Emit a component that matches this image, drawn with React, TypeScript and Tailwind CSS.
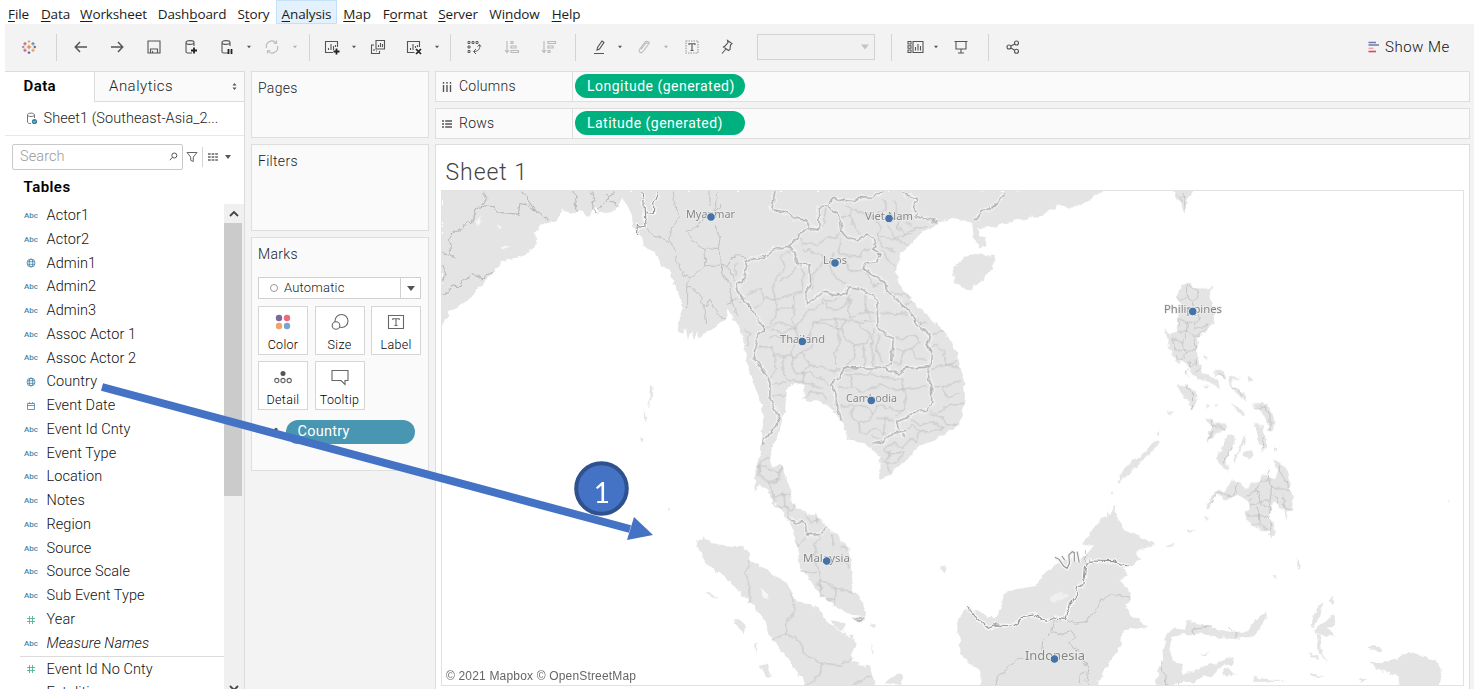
import type { ReactNode } from "react";

const MENU = [
  { pre: "", key: "F", post: "ile", box: "w-[37px]" },
  { pre: "", key: "D", post: "ata", box: "w-[37px]" },
  { pre: "", key: "W", post: "orksheet", box: "w-[79px]" },
  { pre: "Dash", key: "b", post: "oard", box: "w-[78px]" },
  { pre: "S", key: "t", post: "ory", box: "w-[45px]" },
  { pre: "", key: "A", post: "nalysis", box: "w-[61px] bg-[#e3f1fc] border border-[#c5e1f7]" },
  { pre: "", key: "M", post: "ap", box: "w-[40px]" },
  { pre: "F", key: "o", post: "rmat", box: "w-[56px]" },
  { pre: "", key: "S", post: "erver", box: "w-[50px]" },
  { pre: "Wi", key: "n", post: "dow", box: "w-[63px]" },
  { pre: "", key: "H", post: "elp", box: "w-[40px]" },
];

function Icon({ ml, faded, children }: { ml: string; faded?: boolean; children: ReactNode }) {
  return (
    <svg viewBox="0 0 16 16" fill="none" stroke={faded ? "#b9b9b9" : "#555"} strokeWidth="1.1" className={`h-4 w-4 shrink-0 overflow-visible ${ml}`}>
      {children}
    </svg>
  );
}

function Caret({ ml, faded }: { ml: string; faded?: boolean }) {
  return (
    <svg viewBox="0 0 6 4" className={`h-1 w-1.5 shrink-0 ${ml}`}>
      <path d="M1 .7h4L3 3.3z" fill={faded ? "#b0b0b0" : "#555"} />
    </svg>
  );
}

function Sep({ ml }: { ml: string }) {
  return <div className={`h-[27px] w-px shrink-0 bg-[#d4d4d4] ${ml}`} />;
}

function Spark({ x, y, s, c }: { x: number; y: number; s: number; c: string }) {
  return <path d={`M${x - s} ${y}H${x + s}M${x} ${y - s}V${y + s}`} stroke={c} strokeWidth="1.1" />;
}

const DB = "M9 14H4.5C3 13.500 3 13 3 13V3.500M3 3.500C3 1 11 1 11 3.500C11 6 3 6 3 3.500M11 3.500V7";

function Toolbar() {
  return (
    <div className="ml-[5px] flex h-[46px] shrink-0 items-center bg-[#f3f3f3]">
      <Icon ml="ml-[16px]">
        <Spark x={8} y={8} s={2.3} c="#e8762c" />
        <Spark x={4} y={4.800} s={1.700} c="#d05b5b" />
        <Spark x={12} y={4.800} s={1.700} c="#59879b" />
        <Spark x={4} y={11.300} s={1.700} c="#c95a75" />
        <Spark x={12} y={11.300} s={1.700} c="#e39a4c" />
        <Spark x={8} y={2.500} s={1.300} c="#e0a060" />
        <Spark x={8} y={13.600} s={1.300} c="#5b6591" />
        <Spark x={2.200} y={8} s={1.300} c="#8288b5" />
        <Spark x={13.800} y={8} s={1.300} c="#4e5a92" />
      </Icon>
      <Sep ml="ml-[19px]" />
      <Icon ml="ml-[16px]"><path d="M14 8H2.500M7 3L2.300 8L7 13" strokeWidth="1.500" /></Icon>
      <Icon ml="ml-[20px]"><path d="M2 8h11.500M9 3l4.700 5L9 13" strokeWidth="1.500" /></Icon>
      <Icon ml="ml-[21px]"><path d="M2 2h12v12H2zM4.500 14V10h7v4M6.500 12v2" /></Icon>
      <Icon ml="ml-[21px]"><path d={DB} /><path d="M11 8.500v6M8 11.500h6" strokeWidth="1.800" stroke="#222" /></Icon>
      <Icon ml="ml-[20px]"><path d={DB} /><path d="M9.500 10v5M12.500 10v5" strokeWidth="1.800" stroke="#222" /></Icon>
      <Caret ml="ml-[11px]" />
      <Icon ml="ml-[12px]" faded><path d="M2.500 9A5.500 5.500 0 0 1 12 4M13.500 7A5.500 5.500 0 0 1 4 12M9.500 4.300H12.500V1.500M6.500 11.700H3.500V14.500" /></Icon>
      <Caret ml="ml-[12px]" faded />
      <Sep ml="ml-[11px]" />
      <Icon ml="ml-[14px]"><path d="M9 13.500H1.500v-11h12V8M4.500 11V9M7 11V5M9.500 11V7M11.500 8V6" /><path d="M12.500 9.500v6M9.500 12.500h6" strokeWidth="1.800" stroke="#222" /></Icon>
      <Caret ml="ml-[11px]" />
      <Icon ml="ml-[13px]"><path d="M6 1.500h8.500v8.500H6zM8.500 8V6M10.500 8V4M12.500 8V5M4 6H1.500v8.500H9.500V12M4 12V10M6.500 12.500V11.500" /></Icon>
      <Icon ml="ml-[20px]"><path d="M8.500 13.500H1.500v-11h12V8M4.500 11V9M7 11V5M9.500 9V7M11.500 8V6" /><path d="M10 10l5 5M15 10l-5 5" strokeWidth="1.700" stroke="#222" /></Icon>
      <Caret ml="ml-[12px]" />
      <Sep ml="ml-[10px]" />
      <Icon ml="ml-[15px]"><path d="M2 2.500h2v2H2zM6 2.500h2v2H6zM10 2.500h2v2h-2zM2 7h2v2H2zM2 11.500h2v2H2zM13.500 6c1 4-1.500 6.500-5.500 6.500M10 10L7.500 12.500L10 15M11.500 7.500L13.500 5.500L15 7.500" strokeWidth=".95" /></Icon>
      <Icon ml="ml-[22px]" faded><path d="M3 2v11M1 11l2 2.500L5 11M7 2.500h2v2H7zM7 7h5v2H7zM7 11.500h7.500v2H7z" /></Icon>
      <Icon ml="ml-[21px]" faded><path d="M3 2v11M1 11l2 2.500L5 11M7 2.500h7.500v2H7zM7 7h5v2H7zM7 11.500h2v2H7z" /></Icon>
      <Sep ml="ml-[18px]" />
      <Icon ml="ml-[16px]"><path d="M5 11l.5-2.500L10 2l2 1.300L7.500 10zM2 14.500h10" /></Icon>
      <Caret ml="ml-[9px]" />
      <Icon ml="ml-[13px]" faded><path d="M5 10.500L9.500 4.500C11 3 13 4.500 12 6L7 12.500C5 15 2 12.500 3.500 10.500L8.500 3.500C10.500 1 14 3 13 5" /></Icon>
      <Caret ml="ml-[11px]" faded />
      <Icon ml="ml-[15px]"><path d="M2 2h12v12H2z" strokeDasharray="1.500 1" stroke="#999" /><path d="M5 6V4.800h6V6M8 5v6.500M6.500 11.500h3" /></Icon>
      <Icon ml="ml-[19px]"><path d="M8.500 1.500L13 4.500L11.500 6L11 10.500L9.500 11.500L4.500 8L6 7L9 3.500zM7 10l-4 4.500" /></Icon>
      <div className="ml-[22px] flex h-[26px] w-[118px] shrink-0 items-center justify-end border border-[#d2d2d2] bg-[#f1f1f1] pr-[5px]">
        <svg viewBox="0 0 8 6" className="h-1.5 w-2"><path d="M0 .5h8L4 5.500z" fill="#c4c4c4" /></svg>
      </div>
      <Sep ml="ml-[16px]" />
      <Icon ml="ml-[16px]"><path d="M0 2.500h3v2.500H0zM0 6.700h3v2.500H0zM0 11h3v2.500H0zM5 2.500h10v11H5zM7.500 11.500V8M10 11.500V5M12.500 11.500V7" /></Icon>
      <Caret ml="ml-[9px]" />
      <Icon ml="ml-[14px]"><path d="M1.500 2.500h13M3 2.500v7.500h10V2.500M8 10v4M5 14h6" /></Icon>
      <Sep ml="ml-[19px]" />
      <Icon ml="ml-[16px]"><circle cx="4" cy="8" r="2" /><circle cx="11.500" cy="4" r="2" /><circle cx="11.500" cy="12.300" r="2" /><path d="M6 7l3.700-2M6 9l3.700 2.300" /></Icon>
      <svg viewBox="0 0 12 12" className="ml-[347px] h-3 w-3 shrink-0">
        <path d="M.5 1.500H8M.5 4H11" stroke="#6f7ba6" strokeWidth="1.600" />
        <path d="M.5 7.300H5.500" stroke="#f0a0a0" strokeWidth="1.300" />
        <path d="M.5 10.500H8" stroke="#e0485a" strokeWidth="1.600" />
      </svg>
      <span className="ml-[5px] whitespace-nowrap text-[15px] font-light tracking-[0.5px] text-[#111]">Show Me</span>
    </div>
  );
}

type Kind = "abc" | "geo" | "date" | "num";
const FIELDS: [Kind, string][] = [
  ["abc", "Actor1"], ["abc", "Actor2"], ["geo", "Admin1"], ["abc", "Admin2"], ["abc", "Admin3"],
  ["abc", "Assoc Actor 1"], ["abc", "Assoc Actor 2"], ["geo", "Country"], ["date", "Event Date"],
  ["abc", "Event Id Cnty"], ["abc", "Event Type"], ["abc", "Location"], ["abc", "Notes"], ["abc", "Region"],
  ["abc", "Source"], ["abc", "Source Scale"], ["abc", "Sub Event Type"], ["num", "Year"], ["abc", "Measure Names"],
];

function KindIcon({ kind }: { kind: Kind }) {
  if (kind === "abc") return <span className="text-[8px] font-medium leading-none text-[#4a86a8]">Abc</span>;
  return (
    <svg viewBox="0 0 10 10" className="h-2.5 w-2.5" fill="none" stroke={kind === "num" ? "#4fae8b" : "#4a86a8"} strokeWidth=".85">
      {kind === "geo" && <><circle cx="5" cy="5" r="4" /><ellipse cx="5" cy="5" rx="1.800" ry="4" /><path d="M1.300 3.700h7.400M1.300 6.300h7.400" /></>}
      {kind === "date" && <path d="M1.500 2.500h7v6h-7zM1.500 4.500h7M3.300 1v1.500M6.700 1v1.500" />}
      {kind === "num" && <path d="M3.500 1v8M6.500 1v8M1 3.500h8M1 6.500h8" />}
    </svg>
  );
}

function Field({ kind, name }: { kind: Kind; name: string }) {
  return (
    <div className="flex h-[23.780px] shrink-0 items-center">
      <div className="ml-[17px] flex w-[18px] items-center justify-center">
        <KindIcon kind={kind} />
      </div>
      <span className={`ml-[6.500px] whitespace-nowrap text-[14.500px] font-light tracking-[0.08px] text-[#111] ${name === "Measure Names" ? "italic" : ""}`}>{name}</span>
    </div>
  );
}

function DataPane() {
  return (
    <div className="flex w-[240px] shrink-0 flex-col border-r border-t border-[#dcdcdc] bg-white">
      <div className="flex h-[30px] shrink-0">
        <div className="w-[89px] pl-[18.500px] pt-[3px] text-[15px] font-semibold tracking-[0.4px] text-black">Data</div>
        <div className="flex flex-1 items-center justify-between border-b border-l border-[#dcdcdc] bg-[#fafafa] pl-[14px] pr-[7px]">
          <span className="text-[15px] font-light tracking-[0.5px] text-[#222]">Analytics</span>
          <svg viewBox="0 0 5 7" className="h-[7px] w-[5px]"><path d="M2.500 0l2 2.500h-4zM2.500 7l2-2.500h-4z" fill="#555" /></svg>
        </div>
      </div>
      <div className="flex h-[34px] shrink-0 items-center border-b border-[#e8e8e8] pl-[21px]">
        <svg viewBox="0 0 12 13" className="h-[13px] w-3" fill="none" stroke="#777" strokeWidth="1">
          <path d="M5 11.500H3.500C1.500 11 1.500 10 1.500 10V3C1.500.5 8.500.5 8.500 3C8.500 5 1.500 5 1.500 3M8.500 3V6" />
          <circle cx="8.500" cy="9.500" r="2.600" fill="#2f8298" stroke="none" />
          <path d="M7.300 9.500l.9.900L9.800 8.700" stroke="#fff" strokeWidth=".7" />
        </svg>
        <span className="ml-[5.500px] whitespace-nowrap text-[14.500px] font-light tracking-[0.05px] text-[#222]">Sheet1 (Southeast-Asia_2...</span>
      </div>
      <div className="mt-[7px] flex h-[27px] shrink-0 items-center pl-[7px]">
        <div className="flex h-[26px] w-[171px] items-center justify-between rounded-[2px] border border-[#c9c9c9] pl-[7px] pr-[4px]">
          <span className="text-[14.500px] font-light tracking-[0.1px] text-[#999]">Search</span>
          <svg viewBox="0 0 9 9" className="h-[9px] w-[9px]" fill="none" stroke="#555"><circle cx="5.300" cy="3.500" r="2.500" /><path d="M3.500 5.300L.8 8.200" /></svg>
        </div>
        <svg viewBox="0 0 12 12" className="ml-[3px] h-3 w-3" fill="none" stroke="#666"><path d="M1 1.500h10L7.300 6v4.500L4.700 9.300V6z" /></svg>
        <div className="ml-[4px] h-[20px] w-px bg-[#d4d4d4]" />
        <svg viewBox="0 0 10 8" className="ml-[5px] h-2 w-2.5" stroke="#666" strokeWidth="1.700"><path d="M0 1h10M0 4h10M0 7h10" strokeDasharray="2.700 .9" /></svg>
        <svg viewBox="0 0 6 4" className="ml-[7px] h-1 w-1.5"><path d="M0 0h6L3 4z" fill="#555" /></svg>
      </div>
      <div className="flex h-[34px] shrink-0 items-center pl-[18.500px] pt-[1px] text-[15px] font-semibold tracking-[0.45px] text-black">Tables</div>
      <div className="flex min-h-0 flex-1">
        <div className="flex w-[219px] flex-col overflow-hidden">
          {FIELDS.map(([k, n]) => <Field key={n} kind={k} name={n} />)}
          <div className="mb-[1px] ml-[15px] h-px shrink-0 bg-[#dcdcdc]" />
          <Field kind="num" name="Event Id No Cnty" />
          <Field kind="num" name="Fatalities" />
        </div>
        <div className="flex w-[20px] flex-col items-start overflow-hidden bg-[#f0f0f0]">
          <svg viewBox="0 0 10 10" className="mb-[4px] ml-[4.500px] mt-[5px] h-2.5 w-2.5 shrink-0" fill="none" stroke="#444" strokeWidth="1.800"><path d="M1 7l4-4 4 4" /></svg>
          <div className="h-[273px] w-[18px] shrink-0 bg-[#cbcbcb]" />
          <svg viewBox="0 0 10 10" className="ml-[4.500px] mt-[187px] h-2.5 w-2.5 shrink-0" fill="none" stroke="#444" strokeWidth="1.800"><path d="M1 3l4 4 4-4" /></svg>
        </div>
      </div>
    </div>
  );
}

function MarkButton({ label, children }: { label: string; children: ReactNode }) {
  return (
    <div className="flex h-[49px] w-[50px] flex-col items-center border border-[#d6d6d6] bg-white pt-[5px]">
      <svg viewBox="0 0 20 20" className="h-5 w-5" fill="none" stroke="#666" strokeWidth="1.100">{children}</svg>
      <span className="mt-[4.500px] text-[12.500px] font-light leading-[16px] tracking-[0.3px] text-black">{label}</span>
    </div>
  );
}

function Cards() {
  const title = "text-[14px] font-light leading-[18px] tracking-[0.3px] text-[#222]";
  return (
    <div className="ml-[5.500px] flex w-[178px] shrink-0 flex-col gap-[6px]">
      <div className="h-[67px] border border-[#dedede] bg-[#fafafa] pl-[6.500px] pt-[7px]"><div className={title}>Pages</div></div>
      <div className="h-[87px] border border-[#dedede] bg-[#fafafa] pl-[6.500px] pt-[7px]"><div className={title}>Filters</div></div>
      <div className="h-[234px] border border-[#dedede] bg-[#fafafa] pl-[6.500px] pt-[7px]">
        <div className={title}>Marks</div>
        <div className="mt-[14px] flex h-[22px] w-[163px] items-center border border-[#d0d0d0] bg-white">
          <div className="ml-[11px] h-2 w-2 rounded-full border border-[#999]" />
          <span className="ml-[6px] flex-1 text-[13px] font-light tracking-[0.2px] text-[#222]">Automatic</span>
          <div className="flex h-full w-[20px] items-center justify-center border-l border-[#d0d0d0]">
            <svg viewBox="0 0 8 5" className="h-[5px] w-2"><path d="M0 0h8L4 5z" fill="#555" /></svg>
          </div>
        </div>
        <div className="mt-[7px] grid w-[163px] grid-cols-[50px_50px_50px] gap-x-[6.500px] gap-y-[6px]">
          <MarkButton label="Color">
            <g stroke="none"><circle cx="6" cy="6" r="3.200" fill="#7b6a98" /><circle cx="14" cy="6" r="3.200" fill="#ee6a7c" /><circle cx="6" cy="14" r="3.200" fill="#f1a36c" /><circle cx="14" cy="14" r="3.200" fill="#7ba3d0" /></g>
          </MarkButton>
          <MarkButton label="Size"><circle cx="11.500" cy="9" r="6.500" /><circle cx="6" cy="13.500" r="3.800" fill="#fff" /></MarkButton>
          <MarkButton label="Label"><path d="M2.500 3.500h15v13h-15z" /><path d="M6.800 8V6.800h6.400V8M10 7v6.500M8.500 13.500h3" /></MarkButton>
          <MarkButton label="Detail"><circle cx="10" cy="6.500" r="2.500" fill="#555" stroke="none" /><circle cx="3.800" cy="13.500" r="2.100" /><circle cx="10" cy="13.500" r="2.100" /><circle cx="16.200" cy="13.500" r="2.100" /></MarkButton>
          <MarkButton label="Tooltip"><path d="M2 3.500h16v10h-3v4l-4-4H2z" /></MarkButton>
        </div>
        <div className="mt-[10px] flex items-center">
          <svg viewBox="0 0 16 16" className="ml-[10px] h-4 w-4"><circle cx="8" cy="5.500" r="1.700" fill="#555" /></svg>
          <div className="ml-[2px] flex h-[24px] w-[129px] items-center rounded-full bg-[#4996b2] pl-[11.500px] text-[14.500px] tracking-[0.25px] text-white">Country</div>
        </div>
      </div>
    </div>
  );
}

function Shelf({ label, pill, rows }: { label: string; pill: string; rows?: boolean }) {
  return (
    <div className="flex h-[31px] shrink-0 border border-[#dedede] bg-[#fafafa]">
      <div className="flex w-[137px] items-center border-r border-[#dedede] pl-[6px]">
        <svg viewBox="0 0 10 10" className="h-2.5 w-2.5" stroke="#555" strokeWidth="1.400" fill="none">
          {rows ? <path d="M0 2h2M3.200 2H10M0 5h2M3.200 5H10M0 8h2M3.200 8H10" /> : <path d="M1.500 0v1.700M1.500 3v7M5 0v1.700M5 3v7M8.500 0v1.700M8.500 3v7" />}
        </svg>
        <span className="ml-[7px] text-[14px] font-light tracking-[0.250px] text-[#222]">{label}</span>
      </div>
      <div className="ml-[2px] mt-[2px] flex h-[24px] w-[170px] items-center rounded-full bg-[#00b180] pl-[12px] text-[14px] tracking-[0.48px] text-white">{pill}</div>
    </div>
  );
}

const MAINLAND =
  "M442 190V326L448 313L465 303L473 293L495 272L503 260L520 257L537 245L535 232L540 225L557 221L562 210L571 214L580 209L587 217L594 209L607 213L617 208L622 198L627 205L632 215L633 227L640 235L645 247L657 255L662 266L670 270L673 282L680 295L683 308L680 318L677 332L683 334L685 328L688 338L691 330L694 340L698 332L697 340L703 333L717 327L725 320L728 308L735 322L742 332L745 352L750 375L757 392L762 405L763 425L761 435L763 440L758 460L754 478L755 492L760 484L765 488L773 500L783 513L792 527L797 547L800 567L810 580L820 595L837 607L853 615L867 616L862 602L853 590L851 560L847 547L837 535L827 527L815 515L803 513L792 503L790 490L783 470L780 464L773 467L770 462L772 447L780 430L785 410L787 390L795 383L804 385L805 400L822 402L833 410L842 423L848 438L860 442L870 447L880 457L879 480L893 472L907 460L917 448L928 443L943 435L960 423L963 410L965 398L964 382L957 352L947 335L930 318L913 302L900 285L897 272L900 255L910 245L917 235L930 228L943 221L953 218L963 220L972 223L974 238L980 248L987 246L985 238L980 235L978 228L993 227L1007 222L1030 218L1045 214L1060 204L1070 209L1078 206L1092 198L1104 190Z";
const HAINAN = "M952 268L965 256L975 254L985 255L996 256L992 268L980 283L968 290L955 283Z";
const TAIWAN = "M1173 190L1177 198L1180 205L1184 214L1187 201L1194 190Z";

const PH_LAND = [
  "M240 300L262 295L285 308L325 315L338 300L332 325L333 355L348 385L340 415L325 435L290 458L297 470L284 500L290 512L300 545L310 565L335 572L352 590L358 612L345 600L320 585L290 582L270 560L262 535L240 520L238 540L215 510L205 465L192 435L210 448L228 440L235 395L240 350L230 340Z",
  "M340 560L355 553L372 560L382 578L362 572ZM385 570L422 580L395 588L400 605L432 628L440 650L410 625L395 610ZM445 568L457 582L447 592L443 582Z",
  "M228 598L255 600L288 622L290 650L278 675L262 652L245 620ZM315 600L328 605L318 613ZM198 672L224 684L210 687Z",
  "M312 698L330 700L345 715L384 716L372 735L345 748L322 776L325 745L335 725ZM395 655L415 665L438 690L432 695L410 675Z",
  "M345 820L365 795L380 750L402 748L405 775L388 800L378 825L390 850L380 858L360 838ZM437 745L432 775L415 800L402 838L400 825L415 790ZM428 805L455 795L467 808L450 822L430 820Z",
  "M455 657L505 657L510 675L522 695L520 738L505 738L500 700L480 675ZM458 710L490 725L495 750L500 785L485 798L478 770L470 740Z",
  "M520 820L545 840L560 850L565 880L572 915L580 945L575 975L562 980L560 1010L553 975L530 960L520 950L512 975L500 1000L525 1012L527 1040L514 1060L505 1035L480 1035L455 1020L438 1000L440 980L450 965L440 945L425 935L405 930L380 945L350 928L335 945L330 970L318 978L325 945L345 920L375 915L395 890L420 888L430 910L445 905L455 895L480 890L483 868L525 880L535 855Z",
  "M50 892L75 850L105 825L135 800L160 770L175 765L183 775L140 815L110 845L85 868ZM170 750L178 725L177 752ZM33 920L40 915L36 930ZM315 992L330 1000L318 1008ZM260 1035L290 1037L262 1042ZM312 512L324 518L317 530ZM1038 950L1044 943L1042 956ZM525 785L532 795L526 805ZM320 655L326 665L319 672ZM345 655L362 662L350 668Z",
];
const PH_LINES =
  "M262 297L262 335L245 345L235 340M262 335L275 352L290 340L292 318L265 300M275 352L290 385L297 405L280 412L262 412L260 440L230 440M235 398L245 408L262 412M232 398L238 425M280 412L285 430L325 420L300 450L285 450L260 440L248 470L215 460M248 470L250 495L285 497L288 480L280 450M215 460L222 480L225 498L250 495L262 505L245 520L228 518M262 505L272 495M262 530L272 528L270 545L290 535L288 522M265 555L255 560L265 570M285 560L300 550M258 602L260 610L277 620L278 672M345 570L355 565L380 578M395 605L410 612L425 628M457 665L480 672L500 660L500 672L510 690L510 738M335 705L338 740L322 770M335 722L358 725L372 732M397 785L370 835M490 760L487 790M485 888L507 887L505 855M507 887L515 905L570 917L555 885L537 860L540 835M485 888L470 912L480 945L510 950L515 905M480 945L495 965L508 970L510 950M525 925L535 960M550 925L555 970L575 975M470 912L440 935M460 935L445 950M480 945L465 960L448 962M470 965L478 985L505 1000L508 970M440 992H478M455 1020L470 1015L505 1035M478 985L480 1015M505 1000L515 1015L510 1045M410 890V920L390 935L380 925L350 925L330 955";
const SUMATRA = [
  "M165 540L190 533L215 550L255 556L300 558L325 575L330 600L370 620L400 645L440 665L455 695L475 725L500 725L520 740L545 755L560 785L590 805L620 830L650 850L640 880L630 900L665 915L690 920L700 955L708 985H500L490 960L465 930L430 880L400 840L385 820L375 780L335 730L320 715L290 690L270 665L235 635L200 615L185 590Z",
  "M195 697L215 697L235 718L215 708ZM278 775L300 775L318 805L315 820L295 800ZM360 912L380 915L395 950L378 950ZM345 850L352 848L350 885ZM575 780L595 785L615 795L605 812L585 800ZM30 75L38 80L34 120L24 150L28 110ZM14 155L22 170L16 190ZM4 230L12 235L6 248ZM80 442L88 445L88 460ZM735 970L765 945L790 945L788 975ZM635 772L680 765L675 780L645 785ZM625 825L640 820L645 850ZM345 390L345 405M690 790L705 795L700 802ZM695 855L700 875L694 885Z",
  "M525 735L540 742L532 755L522 748Z",
];
const BORNEO = [
  "M105 390L130 392L160 405L190 415L205 385L213 340L250 327L305 318L330 280L360 255L385 240L440 235L470 200L435 190L460 170L480 130L510 105L512 92L520 108L530 85L535 105L545 120L560 150L600 165L648 188L635 200L590 215L610 240L560 265L570 285L545 300L570 325L580 360L565 385L590 415L630 440L590 448L555 450L550 500L520 540L500 580L480 625H145L145 570L110 550L90 525L78 450L85 410Z",
  "M650 625L655 570L672 540L670 510L685 460L705 445L735 450L740 420L790 435L860 455L915 455L935 425L965 400L972 405L955 435L935 468L880 478L800 465L730 462L695 475L690 510L700 540L725 555L730 580L755 575L780 560L845 545L850 530L875 535L870 552L835 560L815 585L785 590L760 610L715 605L700 625Z",
  "M1310 545L1345 535L1378 517L1420 530L1460 540L1475 570L1465 625H1355L1350 590L1310 570L1290 555ZM1262 500L1305 505L1300 515L1265 508ZM1268 545L1300 550L1308 575L1290 570ZM1100 430L1112 385L1130 370L1125 410L1105 445ZM1145 365L1165 347L1160 375ZM1125 435L1165 405L1168 430L1145 445L1168 470L1110 462L1108 450ZM1115 465L1125 465L1130 520L1145 550L1120 515ZM1085 515L1120 530L1115 540ZM1098 575L1135 590L1100 592ZM930 590L970 598L1027 601L965 605L930 605ZM1232 597L1262 600L1245 610ZM28 262L45 260L42 280ZM1060 235L1066 250L1062 272L1058 255ZM988 285L998 293L994 300ZM780 525L812 512L795 525ZM845 570L862 563L885 590L870 580L855 590ZM680 200L705 190L690 205ZM738 150L765 152L745 158ZM527 75L538 80L530 95ZM522 38L527 35L524 46ZM536 2L550 0L545 10Z",
];
const BORNEO_BORDER =
  "M112 375L115 390L135 415L150 430L168 445L190 435L235 438L255 425L265 410L300 405L335 424L365 412L388 415L405 370L422 345L425 320L440 318L445 290L448 260L462 243L530 245L550 255L572 257";
const BORNEO_LINES =
  "M388 415L420 430L450 425L475 395L490 360L515 348L550 347L575 355M350 455L360 425L388 415M350 455L375 465L410 455L420 470L400 485L410 505L430 510M350 455L325 480L322 510M275 538H255L235 555L215 575L190 590L193 620M440 540L455 565L450 600L455 620M435 620L432 590L445 575M448 210V255M665 545L668 575L680 590L683 620M755 450L780 445L812 437M755 450L762 466M860 443L882 460V475M715 605L720 620";
const BRUNEI = "M360 232L372 238L385 258L395 265L402 250L400 225L410 215L416 218L416 245M424 215L430 248M380 228L388 240";

const INDIA_LINES =
  "M130 20L140 40L125 62L105 75L95 110L65 130L40 145L28 165L32 205L45 218M125 62L160 65L180 82L235 88L240 55L260 60L285 75L245 20M285 75L315 98L322 108M8 205L45 215M8 328L25 322L35 303L60 305L75 280L95 265L125 282L160 262M8 240L18 262L8 285M398 20L407 45L412 80M455 20L462 45L458 75L475 85M525 20L485 60L475 75M500 30L535 65";
const MYANMAR_DARK = "M605 20L612 50L615 125L595 122L592 145M615 82L640 85L642 55L650 40L655 20";
const MYANMAR_LINES =
  "M615 125L640 150L690 170L705 195L710 230L735 270L750 275L800 242L840 240L858 290M700 20L705 65L720 95L695 125L690 170M810 20V60M830 20L825 85L845 60M825 120L840 160L835 190L795 190M795 190L755 165L742 140L775 122L800 85M795 190L797 242M835 190L845 240L862 245L875 215L900 212L925 220M862 245L885 292M750 275L740 305V370M740 305L765 315L785 340L795 370L800 420M795 370L810 345L830 385L855 400M840 240L870 300L875 350L895 395M875 350L860 355M895 350L920 340";
const THAI_BORDERS = [
  "M135 20L125 75L165 80L190 100L230 105L240 130L268 135L265 70L290 60L310 40L370 50L390 38L430 40L455 20",
  "M240 130L208 145L205 160L170 185L130 195L95 220L50 225L40 290L20 300L30 335L65 370L80 400L105 432L85 445L75 490L70 515L95 550L120 590L120 640L150 700L135 730L100 765L98 780",
  "M290 60L310 75L330 95L335 135L350 155L380 165L410 150L430 165L438 185L428 195L450 208L440 230L405 235L398 250L465 290L470 320L505 345L545 390L560 420L600 450L590 480L605 500L600 545L590 570L605 600L605 660L590 675L540 685L530 700L500 710L505 735L525 755",
  "M175 185L195 200L200 235L240 237L242 290L228 320L230 360L285 318L320 330L350 325L355 305L395 312L440 345L445 430L465 450L490 460L485 535L465 550",
  "M515 25L560 40L550 70L560 95L600 105L628 112",
  "M465 550L510 570L525 545L570 548L600 545M465 550L345 548L330 570L305 600L318 625L320 665L335 705M525 740L480 750L460 770L425 778",
  "M825 22L800 55L780 75L760 75L735 110",
];
const THAI_LINES =
  "M180 195L155 215L165 250L140 275L130 300L135 345L105 340L75 370M200 235L190 260L150 290M215 240L220 275L215 320L180 330L135 345M135 345L140 375L130 400L115 420M140 375L190 365L195 330M190 365L195 385L180 400L200 430L230 380L255 375L280 345L310 350L330 330M285 350L290 370L320 375L350 360L360 330M105 432L150 410L195 430L205 455M250 410L280 405L315 400L345 405L380 410L440 410M250 410L240 440L245 485L215 505L190 515L130 510L125 485L75 490M315 400L325 440L330 475L315 500L318 540M345 405L335 430L345 460L375 480L410 475L420 450L395 430L380 410M360 340L355 370L360 400L410 380L440 385M405 320L408 380L425 400M375 480L370 520L345 545M400 480L405 545M430 430L425 470L430 545M445 450L440 500L460 530M450 385L540 388L580 420M500 460L560 450L570 475L540 490L520 500L495 490M540 490L560 520L590 525M520 500L510 540L490 530M215 505L240 540L310 555L345 548M190 515L185 545L200 570L240 565L275 580L300 605M240 540L215 560L220 590L275 610M165 515L155 545L170 580L200 590L220 590M130 510L140 550L120 580M125 600L165 590M125 630H165M220 645L240 620L275 625L290 645M310 560L370 555M340 570L420 570L425 550M365 575L365 610L325 605M365 610L400 620L450 600L480 610L520 615L515 585L480 580L425 570M520 615L530 640L515 680L500 690M520 615L590 605M605 605L640 605L650 640L690 625M605 550L650 540L680 530M605 490L620 480L640 500L650 540L690 545M640 605L690 590M600 675L620 690L650 660L700 655M320 665L370 660L410 665L430 690M370 665L360 690L390 715L420 705L430 690L440 660L480 670L520 680M390 715L385 740L410 745L440 730L460 750L465 700L440 700M465 700L500 710M540 700L570 720L610 710L640 730L600 740L570 740L560 770M560 770L540 760L520 790L500 775L470 780L460 800L490 810L520 800L500 830L480 835L460 825M425 750L460 770M480 800L470 830L480 860M570 740L550 720L530 735M600 690L640 700L650 720L690 715M280 230L250 265L245 310M310 200L300 250L320 280L350 300L395 312M200 145L220 175L260 180L290 160L320 155L335 135M330 160L325 205L360 215L390 215L400 195L438 185M220 195L270 205L290 230M350 220L355 255L400 260M290 60L280 110L265 135M330 95L360 95L365 75L350 60M360 95L375 130L395 150M370 75L405 85L430 100L450 80L470 70L460 40M430 100L455 125L440 150L490 165L520 150L540 135L590 125M440 150L460 185L500 200M455 195L480 230L500 250M470 120L490 150L510 170L530 180M500 120L520 145L545 150M490 50L500 85L530 100L550 95M510 100L500 130M530 110L545 125M405 260L430 300L465 290M470 320L520 330L545 335M520 360L545 350M560 420L590 410M600 450L640 440M50 330L90 310L100 345M0 350L20 340M45 430L60 445L50 480M20 230L15 270M200 430L160 440L120 435M120 455L205 460M190 475L185 515M240 440L230 470L205 455M335 430L300 425L260 410M85 835L110 850L145 865L155 845M85 835L90 870L120 890L150 880";
const MALAY_DARK = "M445 470L455 482L495 490L500 525L545 520L560 500M645 775L660 770L675 775M648 780L670 778";
const MALAY_LINES =
  "M362 300L352 345L385 370L410 365L425 320M385 370L400 405L450 405M400 405L405 440L435 440L432 400M435 440L460 450L465 430M440 440L450 470M500 465L510 485L545 480M530 460L535 490M500 525L475 560L465 545M545 520L525 550L525 610L540 640L540 700M575 520L580 555M480 632L530 642M540 700L560 720L585 715L580 740M540 660L600 690L648 700M585 715L590 680M530 670L545 680L535 690M600 560L630 570M600 600L635 625M365 300H390M330 600L315 640L325 665L330 730M455 700L465 750L440 790L440 820L395 840M440 820L485 850L490 880L545 910L600 915L635 895M545 910L540 945L500 975M695 948L640 975";

const LABELS: [string, number, number, number][] = [
  ["Myanmar", 686, 218, 49], ["Viet Nam", 865, 220, 48], ["Laos", 823, 264, 24], ["Thailand", 780, 342.500, 45],
  ["Cambodia", 846, 401.500, 51], ["Malaysia", 803, 561.500, 47], ["Indonesia", 1025, 660, 60], ["Philippines", 1164, 312.500, 58],
];
const DOTS: [number, number][] = [[711, 217], [889, 218.500], [835, 263], [802.300, 341.500], [871.300, 400.500], [826.700, 561], [1054.500, 659], [1192.700, 311.500]];

function Borders({ d, strong }: { d: string; strong?: boolean }) {
  if (!strong) return <path d={d} stroke="#b4b4b4" strokeWidth=".7" vectorEffect="non-scaling-stroke" />;
  return (
    <>
      <path d={d} stroke="#f7f7f7" strokeWidth="4" vectorEffect="non-scaling-stroke" />
      <path d={d} stroke="#949494" strokeWidth="1.100" vectorEffect="non-scaling-stroke" />
    </>
  );
}

function MapView() {
  const third = "scale(.33333)";
  const islands = "translate(930 480) scale(.347 .33333)";
  return (
    <svg viewBox="442 191 1021 494" className="block h-[494px] w-[1021px]">
      <defs>
        <filter id="rough" filterUnits="userSpaceOnUse" x="430" y="180" width="1050" height="520" colorInterpolationFilters="sRGB">
          <feTurbulence type="fractalNoise" baseFrequency="0.14" numOctaves="2" seed="4" />
          <feDisplacementMap in="SourceGraphic" scale="6" xChannelSelector="R" yChannelSelector="G" />
        </filter>
      </defs>
      <g filter="url(#rough)" fill="none" strokeLinejoin="round">
        <g fill="#e4e4e4">
          <path d={MAINLAND} /><path d={HAINAN} /><path d={TAIWAN} />
          <g transform={`translate(1100 185) ${third}`}>{PH_LAND.map((d) => <path key={d} d={d} />)}</g>
          <g transform={`translate(640 360) ${third}`}>{SUMATRA.map((d) => <path key={d} d={d} />)}</g>
          <g transform={islands}>{BORNEO.map((d) => <path key={d} d={d} />)}</g>
        </g>
        <g fill="#f6f6f6">
          <path d="M760 588L768 594L769 600L762 596Z" />
          <path d="M1050 596L1060 592L1070 594L1062 600L1052 602Z" opacity=".6" />
          <path d="M475 220L482 216L478 226ZM495 224L503 227L499 229ZM500 246L512 245L505 249Z" />
        </g>
        <g transform={`translate(440 185) ${third}`}><Borders d={INDIA_LINES} /><Borders d={INDIA_LINES} /><Borders d={MYANMAR_LINES} /><Borders d={MYANMAR_DARK} strong /></g>
        <g transform={`translate(730 185) ${third}`}>
          <Borders d={THAI_LINES} />
          {THAI_BORDERS.map((d) => <Borders key={d} d={d} strong />)}
        </g>
        <g transform={`translate(640 360) ${third}`}><Borders d={MALAY_LINES} /><Borders d={MALAY_DARK} strong /></g>
        <g transform={`translate(1100 185) ${third}`}><Borders d={PH_LINES} /><Borders d="M225 28L235 35L255 35M250 25L255 70M237 40L245 50" /></g>
        <g transform={islands}><Borders d={BORNEO_LINES} /><Borders d={BORNEO_BORDER} strong /></g>
      </g>
      <g transform={islands} fill="none"><Borders d={BRUNEI} strong /></g>
      {LABELS.map(([t, x, y, w]) => (
        <text key={t} x={x} y={y} textLength={w} lengthAdjust="spacingAndGlyphs" fontFamily="'Noto Sans', sans-serif" fontSize={t === "Indonesia" ? 13 : 11.500} fill="#868686" stroke="#eeeeee" strokeWidth="1.500" paintOrder="stroke">{t}</text>
      ))}
      {DOTS.map(([x, y]) => <circle key={x} cx={x} cy={y} r="4.300" fill="#4672a4" stroke="#e9eef3" strokeWidth="1" />)}
      <text x="446" y="680" textLength="190" fontFamily="'Liberation Sans', sans-serif" fontSize="12" fill="#666">© 2021 Mapbox © OpenStreetMap</text>
    </svg>
  );
}

export default function App() {
  return (
    <div className="relative flex h-[696px] w-[1474px] flex-col overflow-hidden bg-white font-['Roboto',sans-serif]">
      <div className="flex h-6 shrink-0 font-['Open_Sans',sans-serif] text-[13.500px] tracking-[-0.120px] text-[#1b1b1b]">
        {MENU.map((m) => (
          <div key={m.key + m.post} className={`flex h-6 shrink-0 items-center justify-center whitespace-nowrap pt-[4px] ${m.box}`}>
            <span>{m.pre}<span className="underline underline-offset-2">{m.key}</span>{m.post}</span>
          </div>
        ))}
      </div>
      <Toolbar />
      <div className="ml-[5px] flex h-[619px] shrink-0 overflow-hidden bg-[#f3f3f3] pt-[1px]">
        <DataPane />
        <Cards />
        <div className="ml-[6.500px] flex w-[1035px] shrink-0 flex-col gap-[6px]">
          <Shelf label="Columns" pill="Longitude (generated)" />
          <Shelf label="Rows" pill="Latitude (generated)" rows />
          <div className="-mt-px flex min-h-0 flex-1 flex-col border border-b-0 border-[#dedede] bg-white pl-[5px]">
            <div className="flex h-[45px] shrink-0 items-center pl-[4.500px] pt-[11px] text-[23px] font-light tracking-[0.95px] text-[#444]">Sheet 1</div>
            <div className="h-[496px] w-[1023px] shrink-0 overflow-hidden border border-[#e2e2e2]"><MapView /></div>
          </div>
        </div>
      </div>
      <svg viewBox="0 0 1474 696" className="pointer-events-none absolute left-0 top-0 h-[696px] w-[1474px]">
        <circle cx="601.500" cy="488.500" r="25.300" fill="#4472c4" stroke="#2f528f" strokeWidth="4" />
        <text x="601.800" y="502.500" textAnchor="middle" fontFamily="Lato, sans-serif" fontSize="28" fill="#fff">1</text>
        <path d="M102 387L630 529" stroke="#4472c4" strokeWidth="8" />
        <path d="M653 535L634 517L627 540Z" fill="#4472c4" />
      </svg>
    </div>
  );
}
